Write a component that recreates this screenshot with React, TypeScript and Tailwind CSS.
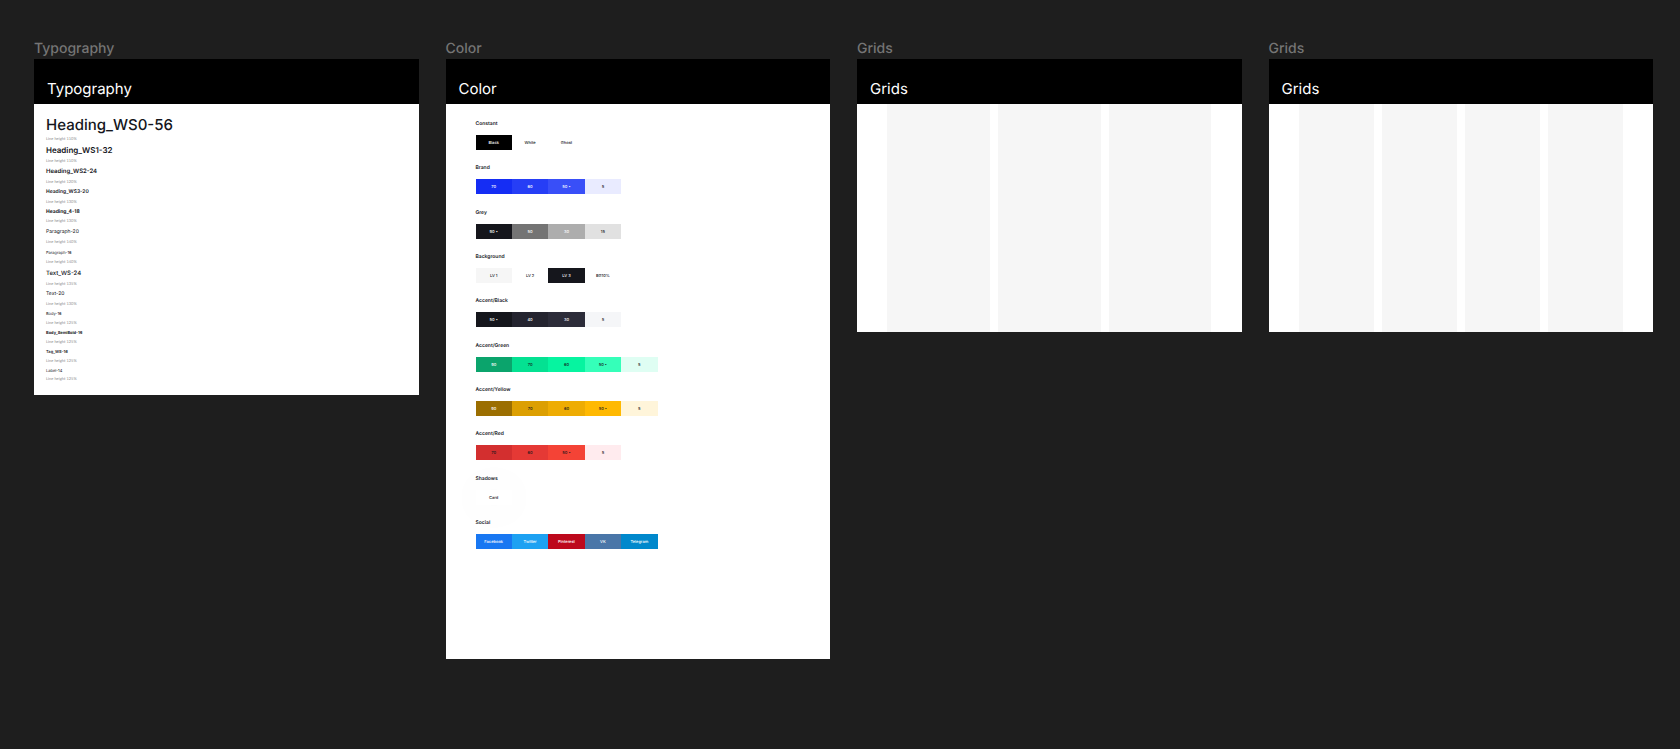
import type { ReactNode } from 'react';
import { clsx } from 'clsx';

interface TextStyle {
  name: string;
  lineHeight: string;
  className: string;
}

interface Swatch {
  label: string;
  className: string;
}

interface SwatchGroup {
  title: string;
  swatches: Swatch[];
}

const textStyles: TextStyle[] = [
  { name: 'Heading_WS0-56', lineHeight: '110%', className: 'text-[15px] leading-[20px] font-medium' },
  { name: 'Heading_WS1-32', lineHeight: '110%', className: 'text-[8px] leading-[13px] font-semibold' },
  { name: 'Heading_WS2-24', lineHeight: '120%', className: 'text-[6px] leading-[12px] font-semibold' },
  { name: 'Heading_WS3-20', lineHeight: '130%', className: 'text-[5px] leading-[11px] font-semibold' },
  { name: 'Heading_4-18', lineHeight: '130%', className: 'text-[5px] leading-[10px] font-bold' },
  { name: 'Paragraph-20', lineHeight: '140%', className: 'text-[5px] leading-[12px]' },
  { name: 'Paragraph-16', lineHeight: '140%', className: 'text-[4px] leading-[11px]' },
  { name: 'Text_WS-24', lineHeight: '135%', className: 'text-[6px] leading-[13px] font-medium' },
  { name: 'Text-20', lineHeight: '130%', className: 'text-[5px] leading-[11px]' },
  { name: 'Body-16', lineHeight: '125%', className: 'text-[4px] leading-[10px]' },
  { name: 'Body_SemiBold-16', lineHeight: '125%', className: 'text-[4px] leading-[10px] font-bold' },
  { name: 'Tag_WS-16', lineHeight: '125%', className: 'text-[4px] leading-[10px] font-semibold' },
  { name: 'Label-14', lineHeight: '125%', className: 'text-[4px] leading-[9px]' },
];

const swatchGroups: SwatchGroup[] = [
  {
    title: 'Constant',
    swatches: [
      { label: 'Black', className: 'bg-black text-white' },
      { label: 'White', className: 'bg-white text-[#15161c]' },
      { label: 'Ghost', className: 'text-[#15161c]' },
    ],
  },
  {
    title: 'Brand',
    swatches: [
      { label: '70', className: 'bg-[#152df4] text-white' },
      { label: '60', className: 'bg-[#263ef6] text-white' },
      { label: '50 •', className: 'bg-[#394ff8] text-white' },
      { label: '5', className: 'bg-[#e9ebff] text-[#15161c]' },
    ],
  },
  {
    title: 'Grey',
    swatches: [
      { label: '90 •', className: 'bg-[#15161c] text-white' },
      { label: '50', className: 'bg-[#747474] text-white' },
      { label: '30', className: 'bg-[#adadad] text-white' },
      { label: '15', className: 'bg-[#e1e1e1] text-[#15161c]' },
    ],
  },
  {
    title: 'Background',
    swatches: [
      { label: 'LV 1', className: 'bg-[#f6f6f6] text-[#15161c]' },
      { label: 'LV 2', className: 'bg-white text-[#15161c]' },
      { label: 'LV 3', className: 'bg-[#15161c] text-white' },
      { label: 'BG10%', className: 'text-[#15161c]' },
    ],
  },
  {
    title: 'Accent/Black',
    swatches: [
      { label: '50 •', className: 'bg-[#15161c] text-white' },
      { label: '40', className: 'bg-[#24242f] text-white' },
      { label: '30', className: 'bg-[#2c2c39] text-white' },
      { label: '5', className: 'bg-[#f5f6f8] text-[#15161c]' },
    ],
  },
  {
    title: 'Accent/Green',
    swatches: [
      { label: '90', className: 'bg-[#0ba46c] text-white' },
      { label: '70', className: 'bg-[#04e192] text-[#15161c]' },
      { label: '60', className: 'bg-[#06f4a0] text-[#15161c]' },
      { label: '50 •', className: 'bg-[#35ffb9] text-[#15161c]' },
      { label: '5', className: 'bg-[#dffef3] text-[#15161c]' },
    ],
  },
  {
    title: 'Accent/Yellow',
    swatches: [
      { label: '90', className: 'bg-[#9b6e01] text-white' },
      { label: '70', className: 'bg-[#dc9f02] text-[#15161c]' },
      { label: '60', className: 'bg-[#eeac03] text-[#15161c]' },
      { label: '50 •', className: 'bg-[#ffb902] text-[#15161c]' },
      { label: '5', className: 'bg-[#fff5da] text-[#15161c]' },
    ],
  },
  {
    title: 'Accent/Red',
    swatches: [
      { label: '70', className: 'bg-[#d32f2f] text-[#15161c]' },
      { label: '60', className: 'bg-[#e53935] text-[#15161c]' },
      { label: '50 •', className: 'bg-[#f44336] text-[#15161c]' },
      { label: '5', className: 'bg-[#ffebee] text-[#15161c]' },
    ],
  },
  {
    title: 'Shadows',
    swatches: [
      { label: 'Card', className: 'bg-white text-[#15161c] shadow-[0_0_48px_rgba(0,0,0,0.06)]' },
    ],
  },
  {
    title: 'Social',
    swatches: [
      { label: 'Facebook', className: 'bg-[#1877f2] text-white' },
      { label: 'Twitter', className: 'bg-[#1da1f2] text-white' },
      { label: 'Pinterest', className: 'bg-[#bd081c] text-white' },
      { label: 'VK', className: 'bg-[#4a76a8] text-white' },
      { label: 'Telegram', className: 'bg-[#0088cc] text-white' },
    ],
  },
];

function Frame({ title, children }: { title: string; children: ReactNode }) {
  return (
    <section>
      <p className="text-[14px] leading-5 font-medium text-[#757575]">{title}</p>
      <header className="bg-black px-[13px] pt-[20px] pb-[5px]">
        <h2 className="text-[15px] leading-5 text-white">{title}</h2>
      </header>
      <div className="bg-white">{children}</div>
    </section>
  );
}

function TypographyList() {
  return (
    <ul className="flex flex-col gap-[3px] px-[12px] pt-[11px] pb-[14px]">
      {textStyles.map((style) => (
        <li key={style.name} className="flex flex-col gap-[2px]">
          <p className={clsx('text-[#15161c]', style.className)}>{style.name}</p>
          <p className="font-['Lato',sans-serif] text-[4px] leading-[4px] text-[#8c8c8c]">
            Line height {style.lineHeight}
          </p>
        </li>
      ))}
    </ul>
  );
}

function SwatchSection({ title, swatches }: SwatchGroup) {
  return (
    <div className="flex flex-col gap-[7px]">
      <h3 className="text-[5px] leading-[8px] font-semibold text-[#15161c]">{title}</h3>
      <div className="grid w-[182px] grid-cols-5">
        {swatches.map((swatch) => (
          <div
            key={swatch.label}
            className={clsx('text-center text-[4px] leading-[15px] font-medium', swatch.className)}
          >
            {swatch.label}
          </div>
        ))}
      </div>
    </div>
  );
}

function GridColumns({ count }: { count: number }) {
  return (
    <div className="flex h-[228px] gap-2 px-[30px]">
      {Array.from({ length: count }, (_, i) => (
        <div key={i} className="flex-1 bg-[#f6f6f6]" />
      ))}
    </div>
  );
}

export default function App() {
  return (
    <main className="min-h-screen bg-[#1e1e1e] pt-[39px] pr-[27px] pl-[34px] font-['Inter',sans-serif] [text-rendering:geometricPrecision]">
      <div className="grid grid-cols-4 items-start gap-[27px]">
        <Frame title="Typography">
          <TypographyList />
        </Frame>
        <Frame title="Color">
          <div className="flex min-h-[555px] flex-col justify-between px-[30px] pt-4 pb-[110px]">
            {swatchGroups.map((group) => (
              <SwatchSection key={group.title} {...group} />
            ))}
          </div>
        </Frame>
        <Frame title="Grids">
          <GridColumns count={3} />
        </Frame>
        <Frame title="Grids">
          <GridColumns count={4} />
        </Frame>
      </div>
    </main>
  );
}
